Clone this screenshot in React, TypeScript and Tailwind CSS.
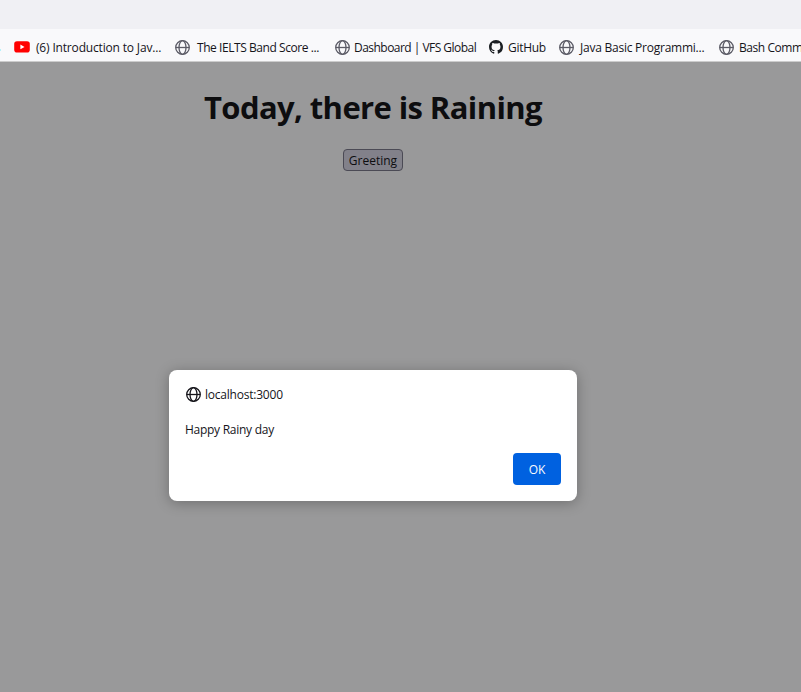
import React from "react";

function Globe({ className }: { className: string }) {
  return (
    <svg viewBox="0 0 16 16" className={`h-4 w-4 shrink-0 ${className}`} fill="none" stroke="currentColor" strokeWidth="1.3">
      <circle cx="7.5" cy="7.5" r="6.8" />
      <ellipse cx="7.5" cy="7.5" rx="3.5" ry="6.8" />
      <path d="M0.8 7.5h13.4" />
    </svg>
  );
}

function YouTube() {
  return (
    <svg viewBox="0 0 16 16" className="h-4 w-4 shrink-0">
      <rect x="0.2" y="1.3" width="15.6" height="11.2" rx="2.8" fill="#ff0000" />
      <path d="M6.4 4.6v4.7L10.5 6.95z" fill="#fff" />
    </svg>
  );
}

function GitHub() {
  return (
    <svg viewBox="0 0 16 16" className="mb-[2px] h-[14px] w-[14px] shrink-0" fill="#1b1f23">
      <path d="M8 0C3.58 0 0 3.58 0 8c0 3.54 2.29 6.53 5.47 7.59.4.07.55-.17.55-.38 0-.19-.01-.82-.01-1.49-2.01.37-2.53-.49-2.69-.94-.09-.23-.48-.94-.82-1.13-.28-.15-.68-.52-.01-.53.63-.01 1.08.58 1.23.82.72 1.21 1.87.87 2.33.66.07-.52.28-.87.51-1.07-1.78-.2-3.64-.89-3.64-3.95 0-.87.31-1.59.82-2.15-.08-.2-.36-1.02.08-2.12 0 0 .67-.21 2.2.82.64-.18 1.32-.27 2-.27s1.36.09 2 .27c1.53-1.04 2.2-.82 2.2-.82.44 1.1.16 1.92.08 2.12.51.56.82 1.27.82 2.15 0 3.07-1.87 3.75-3.65 3.95.29.25.54.73.54 1.48 0 1.07-.01 1.93-.01 2.2 0 .21.15.46.55.38A8.01 8.01 0 0 0 16 8c0-4.42-3.58-8-8-8z" />
    </svg>
  );
}

const bookmarks = [
  { icon: "youtube", label: "(6) Introduction to Jav...", box: "w-[161px] gap-[6px]", text: "tracking-[-0.17px]" },
  { icon: "globe", label: "The IELTS Band Score ...", box: "w-[160px] gap-[6px]", text: "tracking-[-0.44px]" },
  { icon: "globe", label: "Dashboard | VFS Global", box: "w-[154px] gap-[3px]", text: "tracking-[-0.53px]" },
  { icon: "github", label: "GitHub", box: "w-[70px] gap-[5px]", text: "tracking-[-0.3px]" },
  { icon: "globe", label: "Java Basic Programmi...", box: "w-[160px] gap-[5px]", text: "tracking-[-0.24px]" },
  { icon: "globe", label: "Bash Comm", box: "w-[82px] gap-[4px]", text: "tracking-[-0.44px]" },
];

export default function App() {
  return (
    <div className="flex h-[692px] w-[801px] flex-col overflow-hidden bg-[#99999a] font-['Open_Sans','Noto_Sans',sans-serif] text-[12px] text-[#15141a]">
      <div className="h-[29px] shrink-0 bg-[#f0f0f4]" />
      <nav className="flex h-[33px] shrink-0 items-center overflow-hidden border-b border-[#cccccc] bg-[#f9f9fb] pt-[6px]">
        <span className="mt-[3px] h-[2px] w-px shrink-0 bg-[#b5f3fb]" />
        <div className="ml-[13px] flex">
          {bookmarks.map((b) => (
            <a key={b.label} className={`flex shrink-0 items-center whitespace-nowrap leading-4 ${b.box}`}>
              {b.icon === "youtube" && <YouTube />}
              {b.icon === "github" && <GitHub />}
              {b.icon === "globe" && <Globe className="text-[#5b5b66]" />}
              <span className={b.text}>{b.label}</span>
            </a>
          ))}
        </div>
      </nav>

      <main className="flex w-[746px] grow flex-col items-center">
        <h1 className="mt-[23px] text-[31px] leading-[44px] font-bold whitespace-nowrap tracking-[-0.6px] text-[#0d0d0f]">
          Today, there is Raining
        </h1>
        <button className="mt-5 flex h-[22px] w-[60px] items-center justify-center rounded-[4px] border border-[#4b4a55] bg-[#82818a] pt-[2px] text-[12px] text-[#0d0d10]">
          Greeting
        </button>

        <section className="mt-[199px] ml-[169px] flex h-[131px] w-[408px] flex-col self-start rounded-[8px] bg-white px-4 pt-4 pb-4 shadow-[0_2px_14px_rgba(0,0,0,0.28)]">
          <header className="flex h-[17px] items-center gap-[3px] pl-px">
            <Globe className="text-[#15141a]" />
            <span className="font-medium tracking-[-0.22px]">localhost:3000</span>
          </header>
          <p className="mt-[18px] leading-[17px] tracking-[-0.27px]">Happy Rainy day</p>
          <button className="mt-auto flex h-8 w-12 items-center justify-center self-end rounded-[4px] bg-[#0061e0] pt-[2px] text-[12px] font-medium text-[#fbfbfe]">
            OK
          </button>
        </section>
      </main>
    </div>
  );
}
